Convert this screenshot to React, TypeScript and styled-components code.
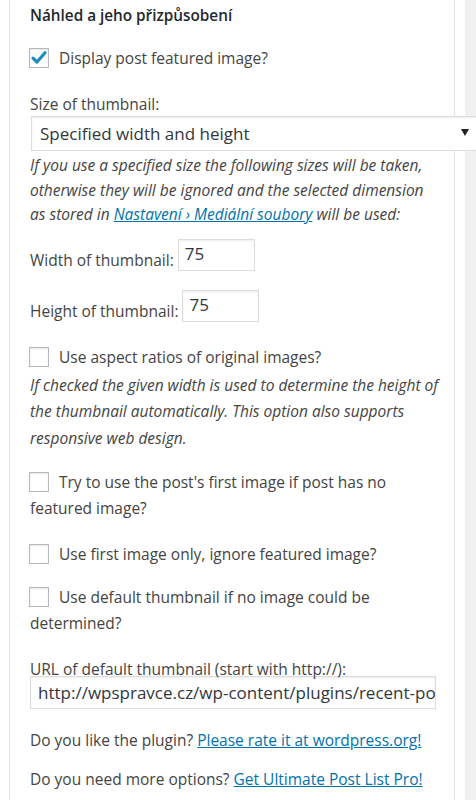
import styled, { createGlobalStyle } from 'styled-components';

const GlobalStyle = createGlobalStyle`
  html, body {
    margin: 0;
    padding: 0;
    background: #fff;
  }
  body {
    font-family: 'Open Sans', 'Noto Sans', sans-serif;
    color: #444;
    overflow: hidden;
  }
`;

interface OptionProps {
  checked?: boolean;
  label: string;
  top: number;
}

function CheckOption({ checked, label, top }: OptionProps) {
  return (
    <OptionRow $top={top}>
      <Box>
        {checked && (
          <svg width="20" height="20" viewBox="0 0 20 20">
            <path d="M4 10.2 L8 14 L16 4.8" fill="none" stroke="#1e8cbe" strokeWidth="3.2" strokeLinecap="round" strokeLinejoin="round" />
          </svg>
        )}
      </Box>
      {label}
    </OptionRow>
  );
}

export default function App() {
  return (
    <>
      <GlobalStyle />
      <Page>
        <Panel>
          <Heading>Náhled a jeho přizpůsobení</Heading>
          <CheckOption checked label="Display post featured image?" top={18} />

          <Label $top={21}>Size of thumbnail:</Label>
          <Select>
            <span>Specified width and height</span>
            <Arrow />
          </Select>
          <Note $lh={24.5}>
            If you use a specified size the following sizes will be taken,
            otherwise they will be ignored and the selected dimension as stored in{' '}
            <Link>Nastavení › Mediální soubory</Link> will be used:
          </Note>

          <FieldRow $top={12}>
            <FieldLabel>Width of thumbnail:</FieldLabel>
            <SmallInput>75</SmallInput>
          </FieldRow>
          <FieldRow $top={19}>
            <FieldLabel>Height of thumbnail:</FieldLabel>
            <SmallInput>75</SmallInput>
          </FieldRow>

          <CheckOption label="Use aspect ratios of original images?" top={22} />
          <Note $lh={26.5}>
            If checked the given width is used to determine the height of the
            thumbnail automatically. This option also supports responsive web design.
          </Note>

          <CheckOption label="Try to use the post's first image if post has no featured image?" top={18} />
          <CheckOption label="Use first image only, ignore featured image?" top={20} />
          <CheckOption label="Use default thumbnail if no image could be determined?" top={17} />

          <Label $top={21}>URL of default thumbnail (start with http://):</Label>
          <UrlInput>http://wpspravce.cz/wp-content/plugins/recent-posts-widget-with-thumbnails/default_thumb.gif</UrlInput>

          <Label $top={19}>
            Do you like the plugin? <Link>Please rate it at wordpress.org!</Link>
          </Label>
          <Label $top={15}>
            Do you need more options? <Link>Get Ultimate Post List Pro!</Link>
          </Label>
        </Panel>
        <Spacer />
        <Gutter />
      </Page>
    </>
  );
}

const Page = styled.div`
  display: flex;
  height: 800px;
  overflow: hidden;
`;

const Panel = styled.div`
  margin-left: 9px;
  width: 424px;
  padding: 0 0 0 20px;
  border-left: 1px solid #e5e5e5;
  border-right: 1px solid #e5e5e5;
  background: #fff;
  position: relative;
  z-index: 1;
`;

const Spacer = styled.div`
  width: 10px;
  background: #fff;
`;

const Gutter = styled.div`
  flex: 1;
  background: #f1f1f1;
`;

const Heading = styled.h4`
  margin: 3px 0 0;
  font-size: 15.3px;
  line-height: 24px;
  font-weight: 600;
  color: #23282d;
`;

const OptionRow = styled.div<{ $top: number }>`
  margin-top: ${({ $top }) => $top}px;
  max-width: 410px;
  font-size: 15.5px;
  line-height: 26px;
`;

const Box = styled.span`
  display: inline-block;
  vertical-align: -4px;
  width: 18px;
  height: 18px;
  margin: 0 10px 0 -1px;
  border: 1px solid #b4b9be;
  background: #fff;
  box-shadow: inset 0 1px 2px rgba(0, 0, 0, 0.1);
  svg {
    display: block;
    margin: -1px;
  }
`;

const Label = styled.div<{ $top: number }>`
  margin-top: ${({ $top }) => $top}px;
  font-size: 15.5px;
  line-height: 24px;
`;

const Select = styled.div`
  margin-left: 1px;
  width: 429px;
  height: 33px;
  border: 1px solid #ddd;
  background: #fff;
  box-shadow: inset 0 1px 2px rgba(0, 0, 0, 0.07);
  display: flex;
  align-items: center;
  justify-content: space-between;
  padding: 0 12px 0 8px;
  box-sizing: content-box;
  font-size: 17px;
  color: #32373c;
`;

const Arrow = styled.span`
  width: 0;
  height: 0;
  margin-top: -3px;
  border-left: 4px solid transparent;
  border-right: 4px solid transparent;
  border-top: 7px solid #222;
`;

const Note = styled.p<{ $lh: number }>`
  margin: 2px 0 0;
  max-width: 410px;
  font-size: 15.5px;
  line-height: ${({ $lh }) => $lh}px;
  font-style: italic;
`;

const Link = styled.a`
  color: #0073aa;
  text-decoration: underline;
  cursor: pointer;
`;

const FieldRow = styled.div<{ $top: number }>`
  margin-top: ${({ $top }) => $top}px;
  display: flex;
  align-items: flex-end;
  gap: 4px;
`;

const FieldLabel = styled.span`
  font-size: 15.5px;
  line-height: 22px;
`;

const SmallInput = styled.span`
  display: inline-block;
  width: 65px;
  height: 30px;
  line-height: 28px;
  padding: 0 4px 0 6px;
  border: 1px solid #ddd;
  box-shadow: inset 0 1px 2px rgba(0, 0, 0, 0.07);
  font-size: 17px;
  color: #32373c;
`;

const UrlInput = styled.div`
  margin-top: -5px;
  width: 390px;
  height: 31px;
  line-height: 31px;
  padding: 0 7px;
  border: 1px solid #ddd;
  box-shadow: inset 0 1px 2px rgba(0, 0, 0, 0.07);
  font-size: 17px;
  color: #32373c;
  white-space: nowrap;
  overflow: hidden;
`;
